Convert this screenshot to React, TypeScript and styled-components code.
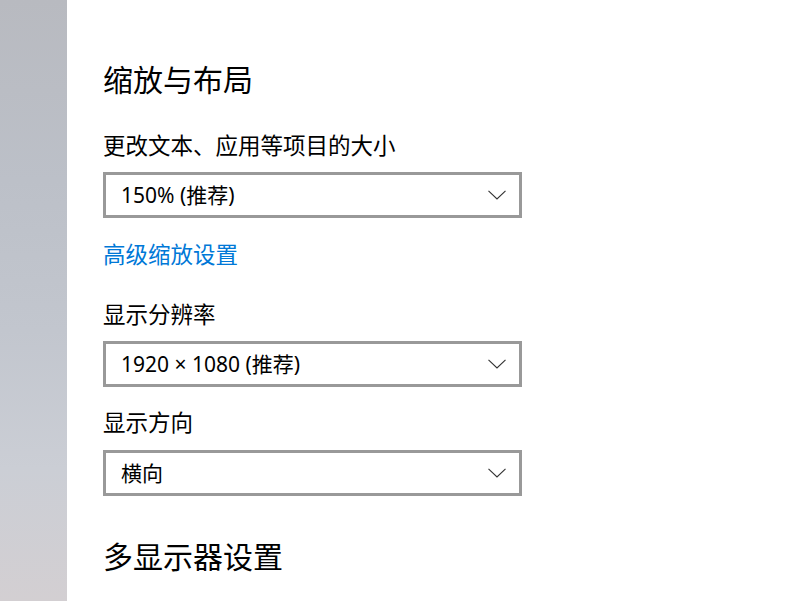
import styled, { createGlobalStyle } from 'styled-components';

const GlobalStyle = createGlobalStyle`
  html, body {
    margin: 0;
    padding: 0;
    background: #ffffff;
  }
  body {
    font-family: "Noto Sans", "Noto Sans CJK SC", sans-serif;
    color: #000000;
  }
`;

const Chevron = () => (
  <svg width="18" height="10" viewBox="0 0 18 10" fill="none">
    <path d="M0.5 0.8 L9 9 L17.5 0.8" stroke="#333333" strokeWidth="1.1" />
  </svg>
);

const App = () => {
  return (
    <>
      <GlobalStyle />
      <Page>
        <Sidebar />
        <Content>
          <Heading>缩放与布局</Heading>
          <Label $gap={31}>更改文本、应用等项目的大小</Label>
          <Select $gap={13}>
            <SelectText>150% (推荐)</SelectText>
            <Chevron />
          </Select>
          <Link $gap={20}>高级缩放设置</Link>
          <Label $gap={30}>显示分辨率</Label>
          <Select $gap={13}>
            <SelectText>1920 × 1080 (推荐)</SelectText>
            <Chevron />
          </Select>
          <Label $gap={19}>显示方向</Label>
          <Select $gap={14}>
            <SelectText>横向</SelectText>
            <Chevron />
          </Select>
          <Heading $gap={39}>多显示器设置</Heading>
        </Content>
      </Page>
    </>
  );
};

export default App;

const Page = styled.div`
  display: flex;
  width: 807px;
  height: 601px;
  overflow: hidden;
`;

const Sidebar = styled.aside`
  width: 67px;
  flex-shrink: 0;
  background: linear-gradient(
    180deg,
    #b8bac0 0%,
    #bcc0c8 30%,
    #c2c6ce 55%,
    #cbced5 78%,
    #d3cfd2 100%
  );
`;

const Content = styled.main`
  flex: 1;
  display: flex;
  flex-direction: column;
  align-items: flex-start;
  padding: 58px 0 0 36px;
`;

const Heading = styled.h1<{ $gap?: number }>`
  margin: ${(p) => p.$gap ?? 0}px 0 0;
  font-family: "Noto Sans CJK SC", sans-serif;
  font-size: 30px;
  font-weight: 400;
  line-height: 40px;
`;

const Label = styled.div<{ $gap?: number }>`
  margin-top: ${(p) => p.$gap ?? 0}px;
  font-family: "Noto Sans CJK SC", sans-serif;
  font-size: 22.5px;
  line-height: 30px;
`;

const Link = styled.a<{ $gap?: number }>`
  margin-top: ${(p) => p.$gap ?? 0}px;
  font-family: "Noto Sans CJK SC", sans-serif;
  font-size: 22.5px;
  line-height: 30px;
  color: #0078d7;
  cursor: pointer;
`;

const Select = styled.div<{ $gap?: number }>`
  margin-top: ${(p) => p.$gap ?? 0}px;
  box-sizing: border-box;
  width: 419px;
  height: 46px;
  border: 3px solid #999999;
  background: #ffffff;
  display: flex;
  align-items: center;
  justify-content: space-between;
  padding: 0 13px 0 15px;
`;

const SelectText = styled.span`
  font-family: "Noto Sans", "Noto Sans CJK SC", sans-serif;
  font-size: 21px;
  line-height: 30px;
`;
